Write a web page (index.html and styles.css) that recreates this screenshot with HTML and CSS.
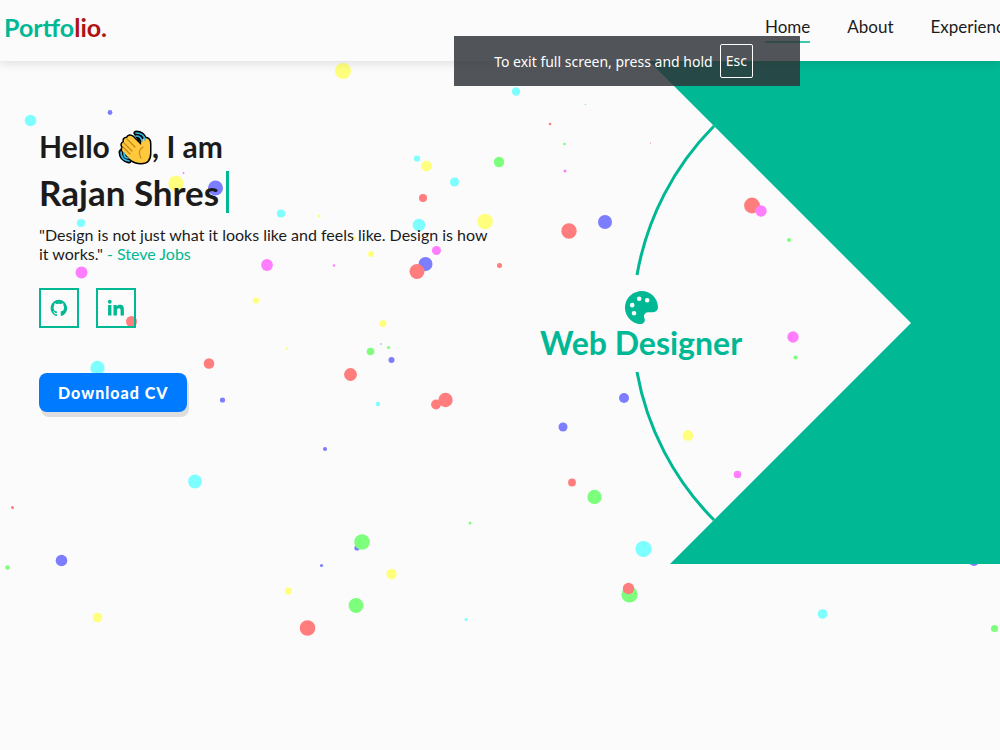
FILE: index.html
```html
<!DOCTYPE html>
<html lang="en">
<head>
	<meta charset="UTF-8">
	<meta name="viewport" content="width=device-width, initial-scale=1.0">
	<title>Portfolio</title>

	<link rel="stylesheet" href="styles.css">
</head>
<body>
	<header class="header">
		<a href="#" class="logo">Portfo<span>lio.</span></a>
		<nav class="navbar">
			<a href="#home" class="navbar__link navbar__link--active">Home</a>
			<a href="#about" class="navbar__link">About</a>
			<a href="#experience" class="navbar__link">Experience</a>
		</nav>
	</header>

	<main class="home" id="home">
		<svg class="particles" id="particles" aria-hidden="true"></svg>

		<section class="intro">
			<h3 class="intro__hello">Hello
				<svg class="wave" viewBox="0 0 34 36" role="img" aria-label="waving hand">
					<g fill="none" stroke="#000" stroke-width="5" stroke-linecap="round" stroke-linejoin="round">
						<path d="M18 3Q25 3 27 10L22 9Z"/>
						<path d="M3 22Q3 29 11 31L8 25Z"/>
					</g>
					<path d="M5 17Q2 14 6 12Q5 8 9 8Q11 4 15 7L23 15Q23 8 27 8Q32 8 32 14V23Q32 33 23 33Q17 33 12 29L5 22Q3 19 5 17Z" fill="#ffc83d" stroke="#000" stroke-width="3" stroke-linejoin="round"/>
					<path d="M5 17Q2 14 6 12Q5 8 9 8Q11 4 15 7L23 15Q23 8 27 8Q32 8 32 14V23Q32 33 23 33Q17 33 12 29L5 22Q3 19 5 17Z" fill="#ffc83d"/>
					<path d="M9 9L17 17M6 13L14 21M5 17L12 24M23 28Q19 21 25 17" fill="none" stroke="#c68a1c" stroke-width="1.2" stroke-linecap="round"/>
					<path d="M18 3Q26 3 27 10M18 6Q23 6 24 11M3 22Q3 30 11 31M6 23Q6 28 10 28" fill="none" stroke="#35b8e8" stroke-width="1.7" stroke-linecap="round"/>
				</svg>, I am</h3>
			<h1 class="intro__name">Rajan Shres</h1>
			<p class="intro__quote">"Design is not just what it looks like and feels like. Design is how it works." <span>- Steve Jobs</span></p>
			<div class="social">
				<a href="#" class="social__link" aria-label="GitHub">
					<svg viewBox="0 0 24 24"><path d="M12 2.2a10 10 0 0 0-3.2 19.5c.5.1.7-.2.7-.5v-1.900c-2.800.6-3.400-1.200-3.400-1.200-.5-1.100-1.100-1.500-1.100-1.500-.9-.6.1-.6.1-.6 1 .1 1.500 1 1.500 1 .9 1.500 2.300 1.100 2.900.8.1-.6.3-1.100.6-1.300-2.200-.3-4.600-1.100-4.600-5 0-1.100.4-2 1-2.700-.1-.2-.4-1.300.1-2.600 0 0 .8-.3 2.700 1a9.600 9.600 0 0 1 5 0c1.900-1.300 2.700-1 2.700-1 .5 1.300.2 2.400.1 2.600.6.7 1 1.600 1 2.700 0 3.900-2.400 4.700-4.600 5 .4.300.7.900.7 1.900v2.800c0 .3.200.6.700.5A10 10 0 0 0 12 2.200z"/></svg>
				</a>
				<a href="#" class="social__link" aria-label="LinkedIn">
					<svg viewBox="0 0 24 24"><circle cx="4.500" cy="4.500" r="2.300"/><path d="M2.500 8.500h4V21h-4zM9 8.500h3.800v1.700c.7-1.200 2-2 3.800-2 3.900 0 4.900 2.400 4.900 5.900V21h-4v-5.800c0-1.700-.3-3-2-3s-2.400 1.300-2.400 3V21H9z"/></svg>
				</a>
			</div>
			<a href="#" class="btn">Download CV</a>
		</section>

		<section class="stage">
			<!-- the ring is cut where the role label sits -->
			<svg class="stage__shape" viewBox="0 0 500 564" aria-hidden="true">
				<path d="M137 275A280 280 0 0 1 214 126M137 372A280 280 0 0 0 214 520" fill="none" stroke="#00b894" stroke-width="3"/>
				<path d="M149 61L411 323L170 564H500V61Z" fill="#00b894"/>
			</svg>
			<div class="role">
				<svg class="role__icon" viewBox="0 0 512 512" aria-hidden="true"><path fill-rule="evenodd" d="M204 6C105 25 25 105 5 204C-33 396 138 531 260 511C300 505 319 458 301 423C279 379 311 328 360 328H437C478 328 512 294 512 253C511 97 369-26 204 6ZM140 310a36 36 0 1 1 0 72a36 36 0 1 1 0-72M112 184a36 36 0 1 1 0 72a36 36 0 1 1 0-72M220 84a36 36 0 1 1 0 72a36 36 0 1 1 0-72M344 108a36 36 0 1 1 0 72a36 36 0 1 1 0-72"/></svg>
				<h2 class="role__text">Web Designer</h2>
			</div>
		</section>
	</main>

	<div class="notice" role="status">To exit full screen, press and hold <kbd>Esc</kbd></div>

	<script src="script.js"></script>
</body>
</html>
```
FILE: styles.css
```css
* {
	box-sizing: border-box;
	margin: 0;
	padding: 0;
}
body {
	min-height: 100vh;
	background: #fbfbfb;
	color: #1b1b1b;
	font-family: 'Lato', sans-serif;
	overflow: hidden;
}
a {
	text-decoration: none;
}
.header {
	position: relative;
	z-index: 2;
	display: flex;
	height: 61px;
	padding: 0 4px;
	justify-content: space-between;
	align-items: center;
	background: #fbfbfb;
	box-shadow: 0 2px 10px rgba(0, 0, 0, .12);
}
.logo {
	padding-bottom: 8px;
	color: #00b894;
	font-size: 25px;
	font-weight: 700;
}
.logo span {
	color: #b11212;
}
.navbar {
	display: flex;
	width: 231px;
	gap: 37px;
}
.navbar__link {
	height: 25px;
	color: #1b1b1b;
	font-size: 17px;
	line-height: 18px;
}
.navbar__link--active {
	border-bottom: 2px solid #3cc8ac;
}
.home {
	position: relative;
	display: flex;
	justify-content: space-between;
	min-height: calc(100vh - 61px);
}
.particles {
	position: absolute;
	top: 0;
	left: 0;
	width: 100%;
	height: 100%;
	pointer-events: none;
}
.intro {
	position: relative;
	width: 50%;
	min-width: 500px;
	padding: 62px 8px 0 39px;
}
.intro__hello {
	font-size: 30px;
	line-height: 46px;
}
.wave {
	width: 34px;
	height: 36px;
	margin-left: 1px;
	vertical-align: -8px;
}
.intro__name {
	width: max-content;
	margin-top: 2px;
	padding-right: 7px;
	border-right: 3px solid #00b894;
	font-size: 35px;
	line-height: 42px;
}
.intro__quote {
	margin-top: 12px;
	font-size: 16px;
	line-height: 19px;
}
.intro__quote span {
	color: #00b894;
}
.social {
	display: flex;
	margin-top: 25px;
	gap: 17px;
}
.social__link {
	display: flex;
	width: 40px;
	height: 40px;
	justify-content: center;
	align-items: center;
	border: 2px solid #00b894;
}
.social__link svg {
	width: 20px;
	height: 20px;
	fill: #00b894;
}
.btn {
	display: inline-block;
	margin-top: 45px;
	padding: 0 19px;
	border-radius: 8px;
	background: #007bff;
	box-shadow: 2px 5px 0 #dedede;
	color: #fff;
	font-size: 16px;
	font-weight: 900;
	line-height: 39px;
	letter-spacing: 1px;
}
.stage {
	position: relative;
	width: 50%;
	min-width: 500px;
}
.stage__shape {
	display: block;
	width: 100%;
	margin-top: -61px;
}
.role {
	position: absolute;
	top: 230px;
	left: 40px;
	display: flex;
	flex-direction: column;
	align-items: center;
}
.role__icon {
	width: 33px;
	height: 33px;
	fill: #00b894;
}
.role__text {
	color: #00b894;
	font-size: 32px;
	line-height: 38px;
}
.notice {
	position: absolute;
	top: 36px;
	left: 454px;
	z-index: 3;
	display: flex;
	width: 346px;
	height: 50px;
	padding-right: 7px;
	justify-content: center;
	align-items: center;
	gap: 7px;
	background: rgba(46, 49, 54, .83);
	color: #fff;
	font-family: 'Noto Sans', 'Open Sans', sans-serif;
	font-size: 14px;
}
.notice kbd {
	padding: 0 5px;
	border: 1px solid #fff;
	border-radius: 2px;
	font-family: inherit;
	font-size: 14px;
	line-height: 32px;
}
```
FILE: script.js
```js
var svg, colors, dots;

svg = document.querySelector('#particles');

colors = {
	r: '#ff7d7d',
	g: '#7dff7d',
	b: '#7d7dff',
	y: '#ffff7d',
	c: '#7dffff',
	m: '#ff7dff'
};

// color, x, y, radius
dots = [
	['y', 343, 10, 8], ['c', 516, 30.5, 4.2], ['b', 110, 51.5, 2.4], ['c', 30.5, 59.5, 5.8],
	['y', 176, 122.5, 7.7], ['m', 183.5, 112, 1], ['b', 215.5, 127, 7.5], ['c', 81, 162, 4.1],
	['c', 281, 152.5, 4.1], ['y', 319, 155, 1.5], ['y', 354, 177, 2], ['y', 371, 193, 3],
	['m', 267, 204, 5.9], ['m', 334, 204.5, 1.2], ['m', 81.5, 211.5, 6],
	['c', 417, 97.5, 3.1], ['y', 426.5, 105, 5.3], ['c', 454.5, 121, 4.5], ['r', 423, 137, 4],
	['g', 499, 101, 5.2], ['y', 485, 160.5, 7.8], ['c', 419, 164, 6.3], ['m', 436.5, 189.5, 4.5],
	['b', 425.5, 203, 7], ['r', 417, 210.5, 7.5], ['r', 499.5, 204.5, 2.5],
	['g', 585.5, 43.5, 0.8], ['r', 550, 63, 1.3], ['g', 564.5, 83, 1.3], ['r', 650.5, 82, 0.6],
	['m', 565, 110, 1.5], ['r', 569, 170, 7.7], ['b', 605, 161, 7],
	['r', 752, 144.5, 7.9], ['m', 761, 150, 5.7], ['g', 789, 179, 2],
	['y', 256, 239.5, 3.1], ['r', 131.5, 260.5, 5.5], ['c', 97.5, 307, 7.2], ['r', 209, 302.5, 5.3],
	['b', 222.5, 339, 2.6], ['y', 286.5, 287.5, 1.3], ['y', 383, 262.5, 3.5],
	['b', 381, 283, 0.7], ['g', 388.5, 286.5, 1.6], ['g', 370.5, 290.5, 3.8],
	['b', 391.5, 299, 3], ['r', 350.5, 313.5, 6.4], ['c', 378, 343, 2.2],
	['r', 436, 343.5, 4.9], ['r', 445.5, 339, 7.2], ['b', 325, 388, 2.1],
	['c', 195, 420.5, 6.9], ['r', 12.5, 446.5, 1.5], ['g', 7.5, 506.5, 2.3],
	['b', 61.5, 499.5, 5.8], ['y', 97.5, 556.5, 4.8], ['g', 470, 462, 1.5],
	['b', 357, 487, 2.6], ['g', 362, 481, 7.8], ['b', 321.5, 504.5, 1.6],
	['y', 391.5, 513, 5.2], ['y', 288.5, 530, 3.5], ['g', 356, 544.5, 7.4],
	['r', 307.5, 567, 7.8], ['c', 466, 558.5, 1.5],
	['m', 793, 276, 5.7], ['g', 795.5, 296.5, 2.1], ['b', 624, 337, 5], ['b', 563, 366, 4.5],
	['y', 688, 374.5, 5.4], ['m', 737.5, 413.5, 3.8], ['r', 572, 421.5, 3.9],
	['g', 594.5, 436, 7.2], ['c', 643.5, 488, 8.1], ['g', 629.5, 533.5, 8.1],
	['r', 628.5, 527.5, 5.7], ['b', 974, 500, 5], ['c', 822.5, 553, 4.8], ['g', 994.5, 567.5, 3.6]
];

dots.forEach(function(dot) {
	var circle = document.createElementNS('http://www.w3.org/2000/svg', 'circle');
	circle.setAttribute('fill', colors[dot[0]]);
	circle.setAttribute('cx', dot[1]);
	circle.setAttribute('cy', dot[2]);
	circle.setAttribute('r', dot[3]);
	svg.appendChild(circle);
});
```
